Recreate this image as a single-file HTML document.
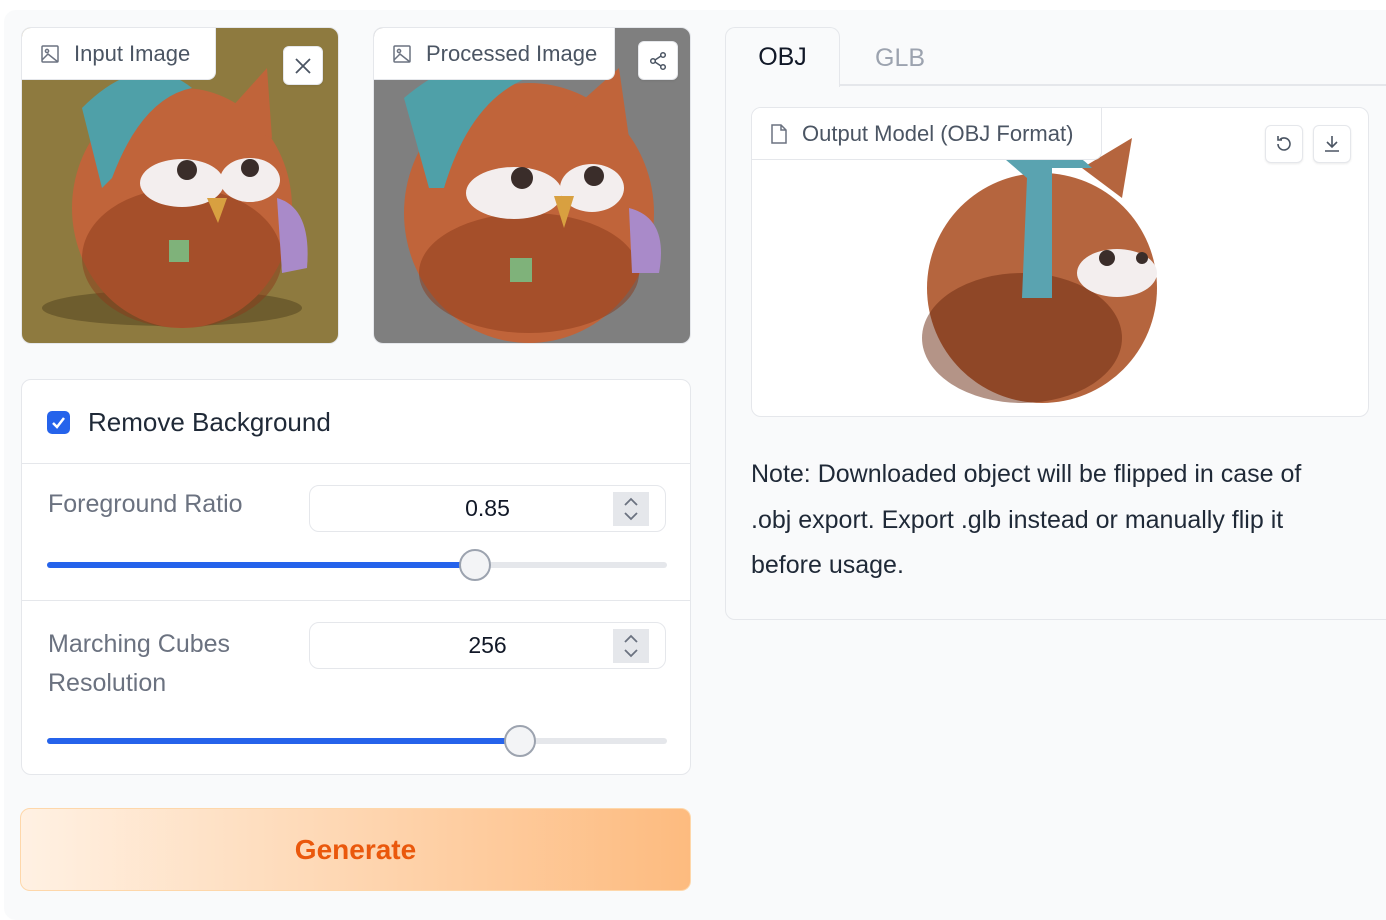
<!DOCTYPE html>
<html><head><meta charset="utf-8"><style>
*{box-sizing:border-box;margin:0;padding:0}
body{width:1386px;height:914px;background:#fff;font-family:"Liberation Sans",sans-serif;position:relative;overflow:hidden;color:#1f2937}
.abs{position:absolute}
.outer{left:4px;top:10px;width:1400px;height:910px;background:#f9fafb;border-radius:12px}
.imgbox{border:1px solid #e5e7eb;border-radius:10px;overflow:hidden}
.lbl{background:#fff;border:1px solid #e5e7eb;border-top:none;border-left:none;border-radius:0 0 8px 0;color:#4b5563;font-size:22px;display:flex;align-items:center;gap:14px;padding-left:18px}
.btn{background:#fff;border:1px solid #e5e7eb;border-radius:6px;display:flex;align-items:center;justify-content:center;box-shadow:0 1px 2px rgba(0,0,0,.08)}
.panel{background:#fff;border:1px solid #e5e7eb;border-radius:10px}
.num{border:1px solid #e5e7eb;border-radius:10px;background:#fff;font-size:23px;color:#111827;display:flex;align-items:center;justify-content:center}
.spin{position:absolute;right:16px;top:6px;width:36px;height:34px;background:#e5e7eb}
.track{height:6px;background:#e5e7eb;border-radius:3px}
.fill{height:6px;background:#2563eb;border-radius:3px}
.thumb{width:32px;height:32px;border-radius:50%;background:#f3f4f6;border:2px solid #9ca3af}
.ttl{font-size:25px;color:#6b7280}
</style></head><body>
<div class="abs outer"></div>

<div class="abs imgbox" style="left:21px;top:27px;width:318px;height:317px;background:#8e7a3f">
<svg width="318" height="317" viewBox="0 0 318 317" style="position:absolute;left:0;top:0">
<ellipse cx="150" cy="280" rx="130" ry="18" fill="#6e5d2e"/>
<ellipse cx="160" cy="180" rx="110" ry="120" fill="#c0643a"/>
<ellipse cx="160" cy="230" rx="100" ry="70" fill="#8a3a1a" opacity=".5"/>
<path d="M200 90 L245 40 L250 110Z" fill="#c0643a"/>
<path d="M60 80 Q120 20 170 60 Q120 70 90 150 L80 160Z" fill="#4fa0a8"/>
<ellipse cx="160" cy="155" rx="42" ry="24" fill="#f3eeee"/><ellipse cx="228" cy="152" rx="30" ry="22" fill="#f3eeee"/>
<circle cx="165" cy="142" r="10" fill="#3a2d2a"/><circle cx="228" cy="140" r="9" fill="#3a2d2a"/>
<path d="M185 170 L205 170 L196 195Z" fill="#d8a040"/>
<rect x="147" y="212" width="20" height="22" fill="#7fb27a"/>
<path d="M255 170 Q290 180 285 240 L260 245Z" fill="#a98ac9"/>
</svg>
<div class="abs lbl" style="left:0;top:0;width:194px;height:52px">
<svg width="20" height="20" viewBox="0 0 20 20" fill="none" stroke="#6b7280" stroke-width="1.5"><rect x="2" y="2" width="16" height="16" rx="1"/><circle cx="7" cy="7" r="1.6"/><path d="M2 16 L8 10 L18 18"/></svg>Input Image</div>
<div class="abs btn" style="left:261px;top:18px;width:40px;height:39px"><svg width="16" height="16" stroke="#4b5563" stroke-width="1.8"><path d="M1 1L15 15M15 1L1 15"/></svg></div>
</div>

<div class="abs imgbox" style="left:373px;top:27px;width:318px;height:317px;background:#7f7f7f">
<svg width="318" height="317" viewBox="0 0 318 317" style="position:absolute;left:0;top:0">
<ellipse cx="155" cy="185" rx="125" ry="130" fill="#c0643a"/>
<ellipse cx="155" cy="245" rx="110" ry="60" fill="#8a3a1a" opacity=".5"/>
<path d="M200 80 L245 40 L255 110Z" fill="#c0643a"/>
<path d="M30 70 Q100 10 170 45 Q100 60 70 160 L55 160Z" fill="#4fa0a8"/>
<ellipse cx="140" cy="165" rx="48" ry="26" fill="#f3eeee"/><ellipse cx="218" cy="160" rx="32" ry="24" fill="#f3eeee"/>
<circle cx="148" cy="150" r="11" fill="#3a2d2a"/><circle cx="220" cy="148" r="10" fill="#3a2d2a"/>
<path d="M180 168 L200 168 L190 200Z" fill="#d8a040"/>
<rect x="136" y="230" width="22" height="24" fill="#7fb27a"/>
<path d="M255 180 Q295 190 285 245 L258 245Z" fill="#a98ac9"/>
</svg>
<div class="abs lbl" style="left:0;top:0;width:241px;height:52px">
<svg width="20" height="20" viewBox="0 0 20 20" fill="none" stroke="#6b7280" stroke-width="1.5"><rect x="2" y="2" width="16" height="16" rx="1"/><circle cx="7" cy="7" r="1.6"/><path d="M2 16 L8 10 L18 18"/></svg>Processed Image</div>
<div class="abs btn" style="left:264px;top:13px;width:40px;height:39px"><svg width="20" height="20" fill="none" stroke="#4b5563" stroke-width="1.5"><circle cx="15" cy="4" r="2.3"/><circle cx="5" cy="10" r="2.3"/><circle cx="15" cy="16" r="2.3"/><path d="M7 9L13 5M7 11L13 15"/></svg></div>
</div>

<div class="abs panel" style="left:21px;top:379px;width:670px;height:396px">
<div class="abs" style="left:25px;top:31px;width:23px;height:23px;background:#2563eb;border-radius:5px"><svg width="23" height="23"><path d="M6 12L10 16L17 7" fill="none" stroke="#fff" stroke-width="2.5"/></svg></div>
<div class="abs" style="left:66px;top:27px;font-size:26px;color:#1f2937">Remove Background</div>
<div class="abs" style="left:0;top:83px;width:668px;height:1px;background:#e5e7eb"></div>
<div class="abs ttl" style="left:26px;top:110px">Foreground Ratio</div>
<div class="abs num" style="left:287px;top:105px;width:357px;height:47px">0.85<div class="spin"><svg width="36" height="34" fill="none" stroke="#6b7280" stroke-width="1.8"><path d="M12 13L18 7L24 13M12 21L18 27L24 21"/></svg></div></div>
<div class="abs track" style="left:25px;top:182px;width:620px"></div>
<div class="abs fill" style="left:25px;top:182px;width:430px"></div>
<div class="abs thumb" style="left:437px;top:169px"></div>
<div class="abs" style="left:0;top:220px;width:668px;height:1px;background:#e5e7eb"></div>
<div class="abs ttl" style="left:26px;top:245px;line-height:39px">Marching Cubes<br>Resolution</div>
<div class="abs num" style="left:287px;top:242px;width:357px;height:47px">256<div class="spin"><svg width="36" height="34" fill="none" stroke="#6b7280" stroke-width="1.8"><path d="M12 13L18 7L24 13M12 21L18 27L24 21"/></svg></div></div>
<div class="abs track" style="left:25px;top:358px;width:620px"></div>
<div class="abs fill" style="left:25px;top:358px;width:475px"></div>
<div class="abs thumb" style="left:482px;top:345px"></div>
</div>

<div class="abs" style="left:20px;top:808px;width:671px;height:83px;border-radius:10px;background:linear-gradient(90deg,#fff1e3,#fdbb7f);border:1px solid #fed7aa;display:flex;align-items:center;justify-content:center;font-size:28px;font-weight:bold;color:#ea580c">Generate</div>

<div class="abs" style="left:725px;top:85px;width:680px;height:535px;border:1px solid #e5e7eb;border-radius:0 0 0 10px;background:#f9fafb"></div>
<div class="abs" style="left:840px;top:84px;width:560px;height:1px;background:#e5e7eb"></div>
<div class="abs" style="left:725px;top:27px;width:115px;height:60px;border:1px solid #e5e7eb;border-bottom:none;border-radius:10px 10px 0 0;background:#f9fafb;font-size:25px;color:#111827;display:flex;align-items:center;justify-content:center">OBJ</div>
<div class="abs" style="left:875px;top:44px;font-size:25px;color:#9ca3af">GLB</div>

<div class="abs panel" style="left:751px;top:107px;width:618px;height:310px;overflow:hidden">
<svg width="618" height="310" style="position:absolute;left:0;top:0">
<ellipse cx="290" cy="180" rx="115" ry="115" fill="#b5653e"/>
<ellipse cx="270" cy="230" rx="100" ry="65" fill="#6a2a10" opacity=".5"/>
<path d="M330 60 L380 30 L370 90Z" fill="#b5653e"/>
<path d="M240 40 Q300 20 340 60 L300 60 L300 190 L270 190 L275 70Z" fill="#5aa3b0"/>
<ellipse cx="365" cy="165" rx="40" ry="24" fill="#f3eeee"/>
<circle cx="355" cy="150" r="8" fill="#3a2d2a"/><circle cx="390" cy="150" r="6" fill="#3a2d2a"/>
</svg>
<div class="abs lbl" style="left:0;top:0;width:350px;height:52px;font-size:22px">
<svg width="18" height="20" viewBox="0 0 18 20" fill="none" stroke="#6b7280" stroke-width="1.5"><path d="M2 1H11L16 6V19H2Z M11 1V6H16"/></svg>Output Model (OBJ Format)</div>
<div class="abs btn" style="left:513px;top:17px;width:38px;height:38px"><svg width="20" height="20" fill="none" stroke="#4b5563" stroke-width="1.6"><path d="M4 10A6 6 0 1 0 6 5.5M4 2V6H8"/></svg></div>
<div class="abs btn" style="left:561px;top:17px;width:38px;height:38px"><svg width="20" height="20" fill="none" stroke="#4b5563" stroke-width="1.6"><path d="M10 2V13M5 8L10 13L15 8M3 17H17"/></svg></div>
</div>

<div class="abs" style="left:751px;top:452px;width:585px;font-size:25px;line-height:45.5px;color:#1f2937">Note: Downloaded object will be flipped in case of .obj export. Export .glb instead or manually flip it before usage.</div>
</body></html>
